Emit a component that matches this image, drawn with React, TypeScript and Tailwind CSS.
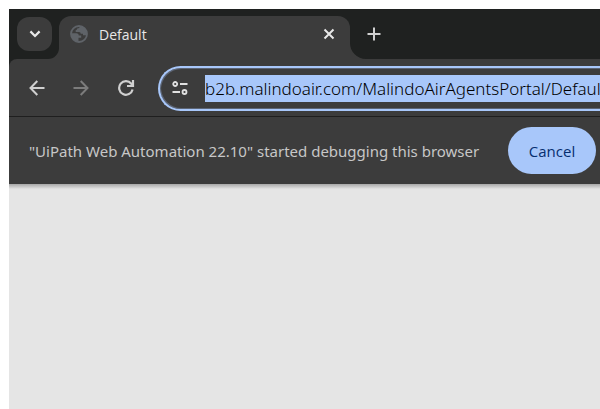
import React from "react";

function TabStrip() {
  return (
    <div className="flex h-[50px] items-end bg-[#1f2120]">
      <button
        type="button"
        aria-label="Search tabs"
        className="mb-2 ml-2 flex h-[34px] w-[35px] shrink-0 items-center justify-center rounded-xl bg-[#3c3c3c] text-[#e8e8e8]"
      >
        <svg width="12" height="8" viewBox="0 0 12 8" fill="none" stroke="currentColor" strokeWidth="2.2">
          <path d="M1.4 1.4 6 6l4.6-4.6" />
        </svg>
      </button>
      <svg className="-ml-1 shrink-0" width="11" height="11" viewBox="0 0 11 11" fill="#3c3c3c">
        <path d="M11 0v11H0A11 11 0 0 0 11 0Z" />
      </svg>
      <div className="flex h-[43px] w-[291px] shrink-0 items-center rounded-t-xl bg-[#3c3c3c] pr-3.5 pb-[7px] pl-[11px]">
        <svg className="shrink-0" width="18" height="18" viewBox="0 0 18 18">
          <circle cx="9" cy="9" r="8" fill="#3c3c3c" stroke="#5f6368" strokeWidth="1.8" />
          <path
            fill="#5f6368"
            d="M1 8.200h5.500c1.500 0 2.300 1 2.300 2.300h2.400v2.300H8.500v3.900C4 17 1 13 1 8.200ZM10 1c-.5.600-.7 1.200-.7 2-1.800 0-2.600.8-2.600 2h-1v2H9c1.200 0 1.600.8 1.700 1.700H13v1.500h4C17.500 5 14 1 10 1Z"
          />
        </svg>
        <span className="ml-[11px] flex-1 pt-px text-sm leading-5 text-[#e8e8e8]">Default</span>
        <button type="button" aria-label="Close tab" className="flex size-3.5 items-center justify-center text-[#e8e8e8]">
          <svg width="12" height="12" viewBox="0 0 12 12" stroke="currentColor" strokeWidth="2">
            <path d="m1.500 1.500 9 9m0-9-9 9" />
          </svg>
        </button>
      </div>
      <svg className="shrink-0" width="16" height="16" viewBox="0 0 16 16" fill="#3c3c3c">
        <path d="M0 0v16h16A16 16 0 0 1 0 0Z" />
      </svg>
      <button type="button" aria-label="New tab" className="mb-[18px] ml-px flex size-3.5 items-center justify-center text-[#d0d0d0]">
        <svg className="shrink-0" width="14" height="14" viewBox="0 0 14 14" stroke="currentColor" strokeWidth="2">
          <path d="M7 .5v13M.5 7h13" />
        </svg>
      </button>
    </div>
  );
}

function Toolbar() {
  return (
    <div className="bg-[#1f2120]">
      <div className="flex h-[57px] items-center rounded-tl-lg bg-[#3c3c3c] pt-1 pb-[3px]">
        <div className="flex shrink-0 items-center gap-7 pr-[23px] pl-5">
          <button type="button" aria-label="Back" className="text-[#d0d0d0]">
            <svg width="16" height="16" viewBox="0 0 16 16" fill="none" stroke="currentColor" strokeWidth="2">
              <path d="M15.500 8H1.800M8.300 1 1.500 8l6.800 7" />
            </svg>
          </button>
          <button type="button" aria-label="Forward" className="text-[#7c7c7c]">
            <svg width="16" height="16" viewBox="0 0 16 16" fill="none" stroke="currentColor" strokeWidth="2">
              <path d="M.5 8h13.700M7.700 1l6.800 7-6.800 7" />
            </svg>
          </button>
          <button type="button" aria-label="Reload" className="text-[#d0d0d0]">
            <svg width="18" height="16" viewBox="0 0 18 16" fill="none" stroke="currentColor" strokeWidth="2.2">
              <path d="M15.600 9.500A6.800 6.800 0 1 1 14.300 3.700L16 5.500M16 0v6H10" />
            </svg>
          </button>
        </div>
        <div className="flex h-[45px] min-w-0 flex-1 items-center rounded-l-full border-y-2 border-l-2 border-[#a8c7fa] pl-3 shadow-[inset_1px_1px_0_#5c6575,inset_1px_-1px_0_#5c6575]">
          <svg className="shrink-0" width="16" height="14" viewBox="0 0 16 14" fill="none" stroke="#e0e0e0" strokeWidth="1.800">
            <circle cx="3.200" cy="3" r="2" />
            <path d="M8 3h7.500M.5 11H8" />
            <circle cx="12.500" cy="11" r="2" />
          </svg>
          <input
            aria-label="Address"
            type="text"
            defaultValue="b2b.malindoair.com/MalindoAirAgentsPortal/Default.aspx"
            className="ml-[17px] h-[27px] min-w-0 flex-1 bg-[#a8c7fa] font-['Noto_Sans','Open_Sans',sans-serif] text-[17px] leading-6 font-light text-black outline-none"
          />
        </div>
      </div>
    </div>
  );
}

function InfoBar() {
  return (
    <div className="flex h-[68px] items-center border-t border-t-[#1f1f1f] bg-[#3c3c3c] pl-5">
      <p className="w-[459px] shrink-0 font-['Noto_Sans','Open_Sans',sans-serif] text-[15px] leading-5 text-[#c7c7c7]">
        "UiPath Web Automation 22.10" started debugging this browser
      </p>
      <button
        type="button"
        className="ml-5 h-[47px] w-[88px] shrink-0 rounded-full bg-[#a8c7fa] text-[15px] leading-5 font-medium text-[#062e6f]"
      >
        Cancel
      </button>
    </div>
  );
}

export default function App() {
  return (
    <div className="flex h-screen flex-col overflow-hidden bg-white pt-[9px] pl-[9px] font-['Open_Sans','Noto_Sans',sans-serif]">
      <header className="shrink-0">
        <TabStrip />
        <Toolbar />
        <InfoBar />
      </header>
      <main className="flex-1 bg-[#e5e5e5]">
        <div className="h-[5px] bg-linear-to-b from-[#a8a8a8] to-[#e5e5e5]" />
      </main>
    </div>
  );
}
